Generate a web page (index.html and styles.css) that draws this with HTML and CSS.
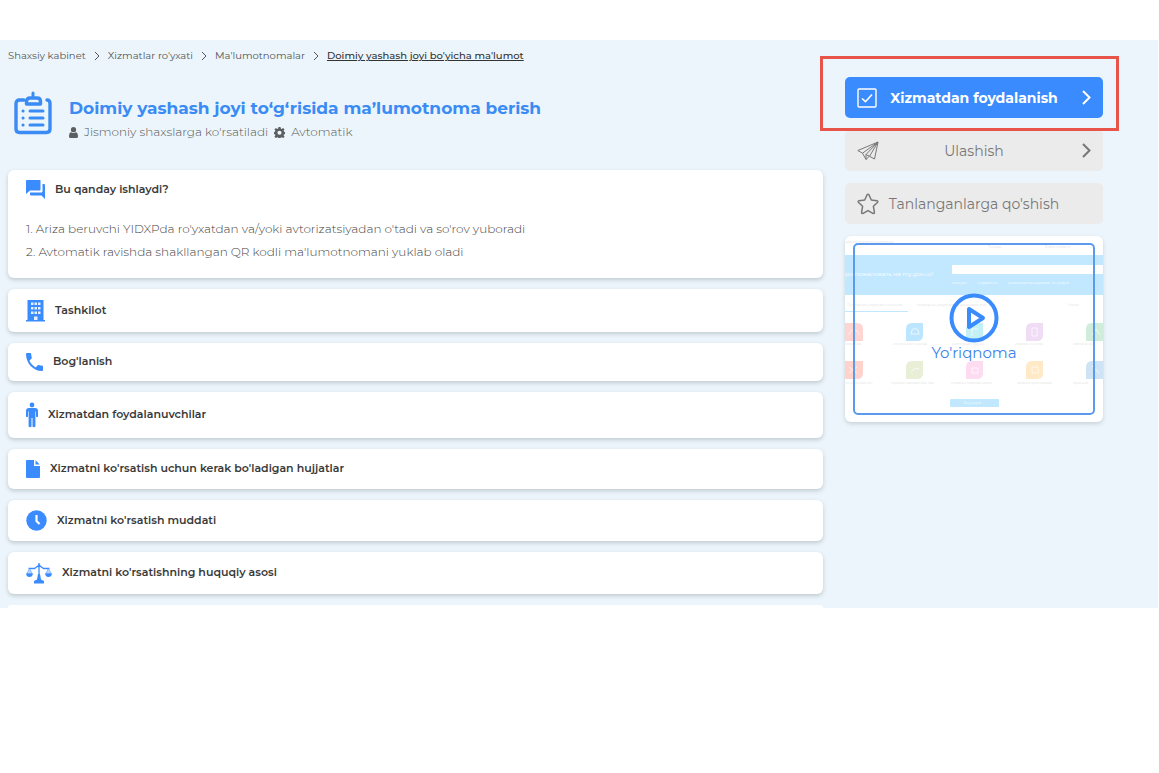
FILE: index.html
```
<!DOCTYPE html>
<html lang="uz">
<head>
<meta charset="utf-8">
<meta name="viewport" content="width=device-width, initial-scale=1">
<title>Doimiy yashash joyi bo'yicha ma'lumot</title>
<link rel="stylesheet" href="styles.css">
</head>
<body>
<div class="page">
  <main class="main">
    <nav class="crumbs" aria-label="Breadcrumb">
      <a href="#">Shaxsiy kabinet</a>
      <svg class="crumb-sep" viewBox="0 0 6 10"><path d="M1 1l4 4-4 4"/></svg>
      <a href="#">Xizmatlar ro'yxati</a>
      <svg class="crumb-sep" viewBox="0 0 6 10"><path d="M1 1l4 4-4 4"/></svg>
      <a href="#">Ma'lumotnomalar</a>
      <svg class="crumb-sep" viewBox="0 0 6 10"><path d="M1 1l4 4-4 4"/></svg>
      <a href="#" class="current" aria-current="page">Doimiy yashash joyi bo'yicha ma'lumot</a>
    </nav>

    <header class="heading">
      <svg class="heading-icon" width="38" height="44" viewBox="0 0 38 44" fill="none" stroke="#3a8bf4" stroke-width="3.4" stroke-linecap="round" stroke-linejoin="round">
        <path d="M10 9H5.500Q2 9 2 12.500V38Q2 41.500 5.500 41.500H32.500Q36 41.500 36 38V12.500Q36 9 33 9"/>
        <path d="M12.500 13V10.500Q12.500 7 16 7H23Q26.500 7 26.500 10.500V13Z"/>
        <path d="M19 2V5M16 20H29M16 27H29M16 34H29M9 20h.1M9 27h.1M9 34h.1" stroke-width="3"/>
      </svg>
      <div class="heading-text">
        <h1>Doimiy yashash joyi to‘g‘risida ma’lumotnoma berish</h1>
        <p class="meta">
          <svg width="9" height="11" viewBox="0 0 9 11" fill="#5c5f62"><circle cx="4.500" cy="2.700" r="2.600"/><path d="M0 9.500C0 6.500 1 5.300 2.200 5.200Q4.500 7 6.800 5.200C8 5.300 9 6.500 9 9.500Q9 11 7.500 11H1.500Q0 11 0 9.500Z"/></svg>
          <span>Jismoniy shaxslarga ko'rsatiladi</span>
          <svg width="11" height="11" viewBox="0 0 24 24" fill="#5c5f62" fill-rule="evenodd"><path d="M9.800 0h4.400l.7 3.500 2 .8 3-2 3.100 3.100-2 3 .8 2 3.200.6v4.400l-3.200.6-.8 2 2 3-3.100 3.100-3-2-2 .8-.7 3.100H9.800l-.7-3.100-2-.8-3 2L1 21l2-3-.8-2-3.200-.6V11l3.200-.6.8-2-2-3 3.100-3.100 3 2 2-.8zM12 8a4.500 4.500 0 1 0 0 9 4.500 4.500 0 0 0 0-9z"/></svg>
          <span>Avtomatik</span>
        </p>
      </div>
    </header>

    <div class="cards">
      <section class="card">
        <button class="card-head" type="button" aria-expanded="true">
          <svg width="19" height="19" viewBox="0 0 19 19" fill="#3a8bfd"><path d="M1 0H14Q14.500 0 14.500 .5V9.500Q14.500 10.500 13.500 10.500H4L0 14V1Q0 0 1 0Z"/><path d="M16.500 4H18Q19 4 19 5V19L15.500 15.500H5Q4 15.500 4 14.500V12.500H15.500Q16.500 12.500 16.500 11.500Z"/></svg>
          <span>Bu qanday ishlaydi?</span>
        </button>
        <ol class="steps">
          <li>Ariza beruvchi YIDXPda ro'yxatdan va/yoki avtorizatsiyadan o'tadi va so'rov yuboradi</li>
          <li>Avtomatik ravishda shakllangan QR kodli ma'lumotnomani yuklab oladi</li>
        </ol>
      </section>
      <section class="card">
        <button class="card-head" type="button" aria-expanded="false">
          <svg width="19" height="23" viewBox="0 0 19 23"><path d="M1.500 1H17.500V21H19V22.500H0V21H1.500Z" fill="#3a8bfd"/><path d="M5 3.500h2.500V6H5zM8.500 3.500H11V6H8.500zM12 3.500h2.500V6H12zM5 8h2.500v2.500H5zM8.500 8H11v2.500H8.500zM12 8h2.500v2.500H12zM5 12.500h2.500V15H5zM8.500 12.500H11V15H8.500zM12 12.500h2.500V15H12zM8 17.500h3.500V21H8z" fill="#e4f0ff"/></svg>
          <span>Tashkilot</span>
        </button>
      </section>
      <section class="card">
        <button class="card-head" type="button" aria-expanded="false">
          <svg width="17" height="18" viewBox="3 3 18 18" fill="#3a8bfd" preserveAspectRatio="none"><path d="M6.600 10.800c1.400 2.800 3.800 5.100 6.600 6.600l2.200-2.200c.3-.3.700-.4 1-.2 1.100.4 2.300.6 3.600.6.600 0 1 .4 1 1V20c0 .6-.4 1-1 1C10.600 21 3 13.400 3 4c0-.6.400-1 1-1h3.500c.6 0 1 .4 1 1 0 1.200.2 2.400.6 3.600.1.300 0 .7-.2 1z"/></svg>
          <span>Bog'lanish</span>
        </button>
      </section>
      <section class="card">
        <button class="card-head" type="button" aria-expanded="false">
          <svg width="12" height="26" viewBox="0 0 12 26" fill="#3a8bfd"><circle cx="6" cy="3" r="2.400"/><path d="M3 6H9Q12 6 12 9V14.500Q11 15.800 10 14.500V9.500H9.400V24.500Q7.800 26 6.500 24.500V16H5.500V24.500Q4.200 26 2.600 24.500V9.500H2V14.500Q1 15.800 0 14.500V9Q0 6 3 6Z"/></svg>
          <span>Xizmatdan foydalanuvchilar</span>
        </button>
      </section>
      <section class="card">
        <button class="card-head" type="button" aria-expanded="false">
          <svg width="14" height="20" viewBox="0 0 14 20" fill="#3a8bfd"><path d="M1 1H8V6.500Q8 7 8.500 7H14V18Q14 19 13 19H1Q0 19 0 18V2Q0 1 1 1Z"/><path d="M9.500 1.200L13.800 5.500H9.500Z"/></svg>
          <span>Xizmatni ko'rsatish uchun kerak bo'ladigan hujjatlar</span>
        </button>
      </section>
      <section class="card">
        <button class="card-head" type="button" aria-expanded="false">
          <svg width="21" height="21" viewBox="0 0 21 21"><circle cx="10.500" cy="10.500" r="10.200" fill="#3a8bfd"/><path d="M10.500 5V11L13.500 14" fill="none" stroke="#fff" stroke-width="2.200"/></svg>
          <span>Xizmatni ko'rsatish muddati</span>
        </button>
      </section>
      <section class="card">
        <button class="card-head" type="button" aria-expanded="false">
          <svg width="26" height="22" viewBox="0 0 26 22" fill="#3a8bfd"><path d="M13 1V17M2.500 6.500H8.500Q11.500 3.800 13 3.800T17.500 6.500H23.500" fill="none" stroke="#3a8bfd" stroke-width="1.300"/><circle cx="13" cy="3.800" r="1.500"/><path d="M3.500 6.500L.8 11.500H6.200ZM22.500 6.500L19.800 11.500H25.200Z" fill="#b9d7fe" stroke="#3a8bfd" stroke-width=".5"/><path d="M0 11.500H7Q6.500 15 3.500 15T0 11.500ZM19 11.500H26Q25.500 15 22.500 15T19 11.500ZM12 12H14L15 17.500L18 19V21.500H8V19L11 17.500Z"/></svg>
          <span>Xizmatni ko'rsatishning huquqiy asosi</span>
        </button>
      </section>
      <div class="card card-edge"></div>
    </div>
  </main>

  <aside class="side">
    <div class="highlight">
      <button class="action primary" type="button">
        <svg width="20" height="20" viewBox="0 0 20 20" fill="none" stroke="#fff"><rect x="1" y="1" width="18" height="18" rx="1" stroke-width="1.400"/><path d="M5 10.500l3.500 3.200L15 6.500" stroke-width="1.600"/></svg>
        <span>Xizmatdan foydalanish</span>
        <svg class="arrow" viewBox="0 0 9 15"><path d="M1 1l6.500 6.500L1 14"/></svg>
      </button>
    </div>
    <button class="action" type="button">
      <svg width="22" height="20" viewBox="0 0 22 20" fill="none" stroke="#777" stroke-width="1" stroke-linejoin="round"><path d="M21 1L.8 9.500L5.500 12.200L21 1L17.500 18L12.500 15.300L21 1L9 13.500V18.500L12.300 15.300M5.500 12.200L9 18.500M9 13.500L12.500 15.300"/></svg>
      <span>Ulashish</span>
      <svg class="arrow" viewBox="0 0 9 15"><path d="M1 1l6.500 6.500L1 14"/></svg>
    </button>
    <button class="action" type="button">
      <svg width="22" height="22" viewBox="0 0 22 22" fill="none" stroke="#777" stroke-width="1.500" stroke-linejoin="round"><path d="M10.100 1.800Q11 .5 11.900 1.800L14.300 7L19.900 7.700Q21.500 8.200 20.400 9.500L16.400 13.300L17.400 19.200Q17.400 20.800 15.900 20.300L11 17.600L6.100 20.300Q4.600 20.800 4.600 19.200L5.600 13.300L1.600 9.500Q.5 8.200 2.100 7.700L7.700 7Z"/></svg>
      <span>Tanlanganlarga qo'shish</span>
    </button>

    <a class="guide" href="#">
      <svg class="guide-shot" viewBox="0 0 258 186" aria-hidden="true">
        <g class="shot-text">
          <text x="0" y="7">единый портал интерактивных</text>
          <text x="143" y="12">Помощь</text><text x="200" y="12">Войти в кабинет</text>
        </g>
        <rect y="19" width="258" height="40" fill="#c1e8fe"/>
        <text class="shot-title" x="0" y="40">ро пожаловать на my.gov.uz!</text>
        <rect x="107" y="29" width="151" height="9" fill="#fff"/>
        <g class="shot-light"><text x="107" y="48">паспорта</text><text x="132" y="48">несудимость</text><text x="163" y="48">регистрация предприятия</text><text x="207" y="48">все услуги</text></g>
        <rect y="75" width="63" height="1" fill="#c1e8fe"/>
        <g class="shot-text"><text x="2" y="70">Популярные услуги для населения</text><text x="72" y="70">популярные услуги для предпринимателей</text><text x="223" y="70">Статьи</text><text x="0" y="109">заявление</text><text x="48" y="109">электронная очередь</text><text x="107" y="109">регистрация адреса</text><text x="170" y="109">справка о составе</text><text x="228" y="109">жилой фонд</text><text x="0" y="148">пенсионный счёт</text><text x="46" y="148">справка о доходах физ. лиц</text><text x="106" y="148">справка о наличии жилья</text><text x="172" y="148">запись в организации</text><text x="228" y="148">проверка</text></g>
        <path d="M0 87H12Q18 87 18 93V105H0Z" fill="#ffd5d2"/><path d="M61 93Q61 87 67 87H78V99Q78 105 72 105H61Z" fill="#bce5ff"/><path d="M121 93Q121 87 127 87H138V99Q138 105 132 105H121Z" fill="#c2f0f5"/><path d="M181 93Q181 87 187 87H198V99Q198 105 192 105H181Z" fill="#f0dcf5"/><path d="M241 93Q241 87 247 87H258V105H241Z" fill="#d0eddc"/>
        <path d="M0 125H18V137Q18 143 12 143H0Z" fill="#ffd3cc"/><path d="M61 131Q61 125 67 125H78V137Q78 143 72 143H61Z" fill="#e9efd7"/><path d="M121 131Q121 125 127 125H138V137Q138 143 132 143H121Z" fill="#fddcf2"/><path d="M181 131Q181 125 187 125H198V137Q198 143 192 143H181Z" fill="#ffe9c6"/><path d="M241 131Q241 125 247 125H258V143H241Z" fill="#cee3f4"/>
        <path fill="none" stroke="#fff" stroke-opacity=".7" d="M4 99a5 5 0 0 1 10 0M66 98h8l-1-4-3-2-3 2zM127 100v-7h6M187 92h5v8h-5zM247 99l4-6 4 6M4 131l8 6M12 131l-8 6M66 136l4-4 4 1M127 132h6v5h-6zM187 131h6v6h-6zM247 130l7 7"/>
        <rect x="105" y="163" width="49" height="8" rx="1" fill="#c1e8fe"/>
        <text class="shot-light" x="119" y="168">Все услуги</text>
      </svg>
      <span class="guide-frame">
        <svg width="50" height="50" viewBox="0 0 50 50" fill="none" stroke="#3a8bfd" stroke-width="4"><circle cx="25" cy="25" r="22.500"/><path d="M20 16L34 25L20 34Z" stroke-linejoin="round"/></svg>
        <span>Yo'riqnoma</span>
      </span>
    </a>
  </aside>
</div>
</body>
</html>
```
FILE: styles.css
```
* { box-sizing: border-box; }

body {
  margin: 0;
  padding: 40px 1px 0 0;
  background: #fff;
  color: #333;
  font-family: Montserrat, Inter, "Noto Sans", sans-serif;
}

button {
  font: inherit;
  border: 0;
  cursor: pointer;
}

h1, p, ol { margin: 0; }

.page {
  display: grid;
  grid-template-columns: minmax(0, 1fr) 258px;
  gap: 22px;
  padding: 0 55px 0 8px;
  background: #ecf5fb;
}

.crumbs {
  display: flex;
  align-items: center;
  gap: 8px;
  padding-top: 8px;
  font-size: 10px;
  line-height: 16px;
}
.crumbs a { color: #555; text-decoration: none; }
.crumbs .current { color: #333; font-weight: 500; text-decoration: underline; }
.crumb-sep { width: 6px; height: 10px; fill: none; stroke: #555; stroke-width: 1; }

.heading {
  display: flex;
  align-items: flex-start;
  gap: 17px;
  padding: 27px 6px 28px;
}
.heading-text { padding-top: 3px; }
.heading h1 {
  color: #3a8bf4;
  font-size: 17px;
  line-height: 28px;
  font-weight: 700;
}
.meta {
  display: flex;
  align-items: center;
  gap: 6px;
  color: #555;
  font-size: 12px;
  line-height: 20px;
  font-weight: 300;
}

.cards { display: grid; gap: 11px; }
.card {
  padding: 10px 18px;
  border-radius: 6px;
  background: #fff;
  box-shadow: 0 2px 4px rgba(60, 80, 90, .25);
}
.card-head {
  display: flex;
  align-items: center;
  gap: 10px;
  width: 100%;
  padding: 0;
  background: none;
  color: #3a3a3a;
  font-size: 11px;
  line-height: 16px;
  font-weight: 600;
  text-align: left;
}
.card-head span { padding-bottom: 2px; }
.card-edge {
  min-height: 3px;
  padding: 0;
  border-radius: 6px 6px 0 0;
  box-shadow: none;
}
.steps {
  padding: 18px 0 5px;
  color: #444;
  font-size: 12px;
  line-height: 23px;
  font-weight: 300;
  list-style: none;
  counter-reset: step;
}
.steps li { counter-increment: step; }
.steps li::before { content: counter(step) ". "; }

.side {
  display: flex;
  flex-direction: column;
  gap: 12px;
  padding-top: 37px;
}
.action {
  display: grid;
  grid-template-columns: 22px 1fr 22px;
  align-items: center;
  width: 100%;
  min-height: 41px;
  padding: 0 12px;
  border-radius: 5px;
  background: #ebebeb;
  color: #777;
  font-size: 14px;
  line-height: 20px;
  white-space: nowrap;
}
.primary { background: #3a8bfd; color: #fff; font-weight: 700; }
.arrow {
  justify-self: end;
  width: 9px;
  height: 15px;
  fill: none;
  stroke: currentColor;
  stroke-width: 2;
}
.highlight { position: relative; z-index: 1; }
.highlight::after {
  content: "";
  position: absolute;
  inset: -21px -16px -13px -25px;
  border: 3px solid #e9544a;
  pointer-events: none;
}

.guide {
  position: relative;
  display: block;
  overflow: hidden;
  border-radius: 6px;
  background: #fff;
  box-shadow: 0 2px 4px rgba(60, 80, 90, .2);
  text-decoration: none;
}
.guide-shot { display: block; width: 100%; height: auto; }
.shot-text { fill: #ddd; font-size: 3px; }
.shot-light { fill: #fff; font-size: 3px; }
.shot-title { fill: #fff; font-size: 6px; }
.guide-frame {
  position: absolute;
  inset: 7px 8px;
  display: flex;
  flex-direction: column;
  align-items: center;
  justify-content: center;
  padding-bottom: 3px;
  border: 2px solid #5b9aed;
  border-radius: 5px;
  color: #3a82e8;
  font-size: 15px;
  line-height: 20px;
}
```
